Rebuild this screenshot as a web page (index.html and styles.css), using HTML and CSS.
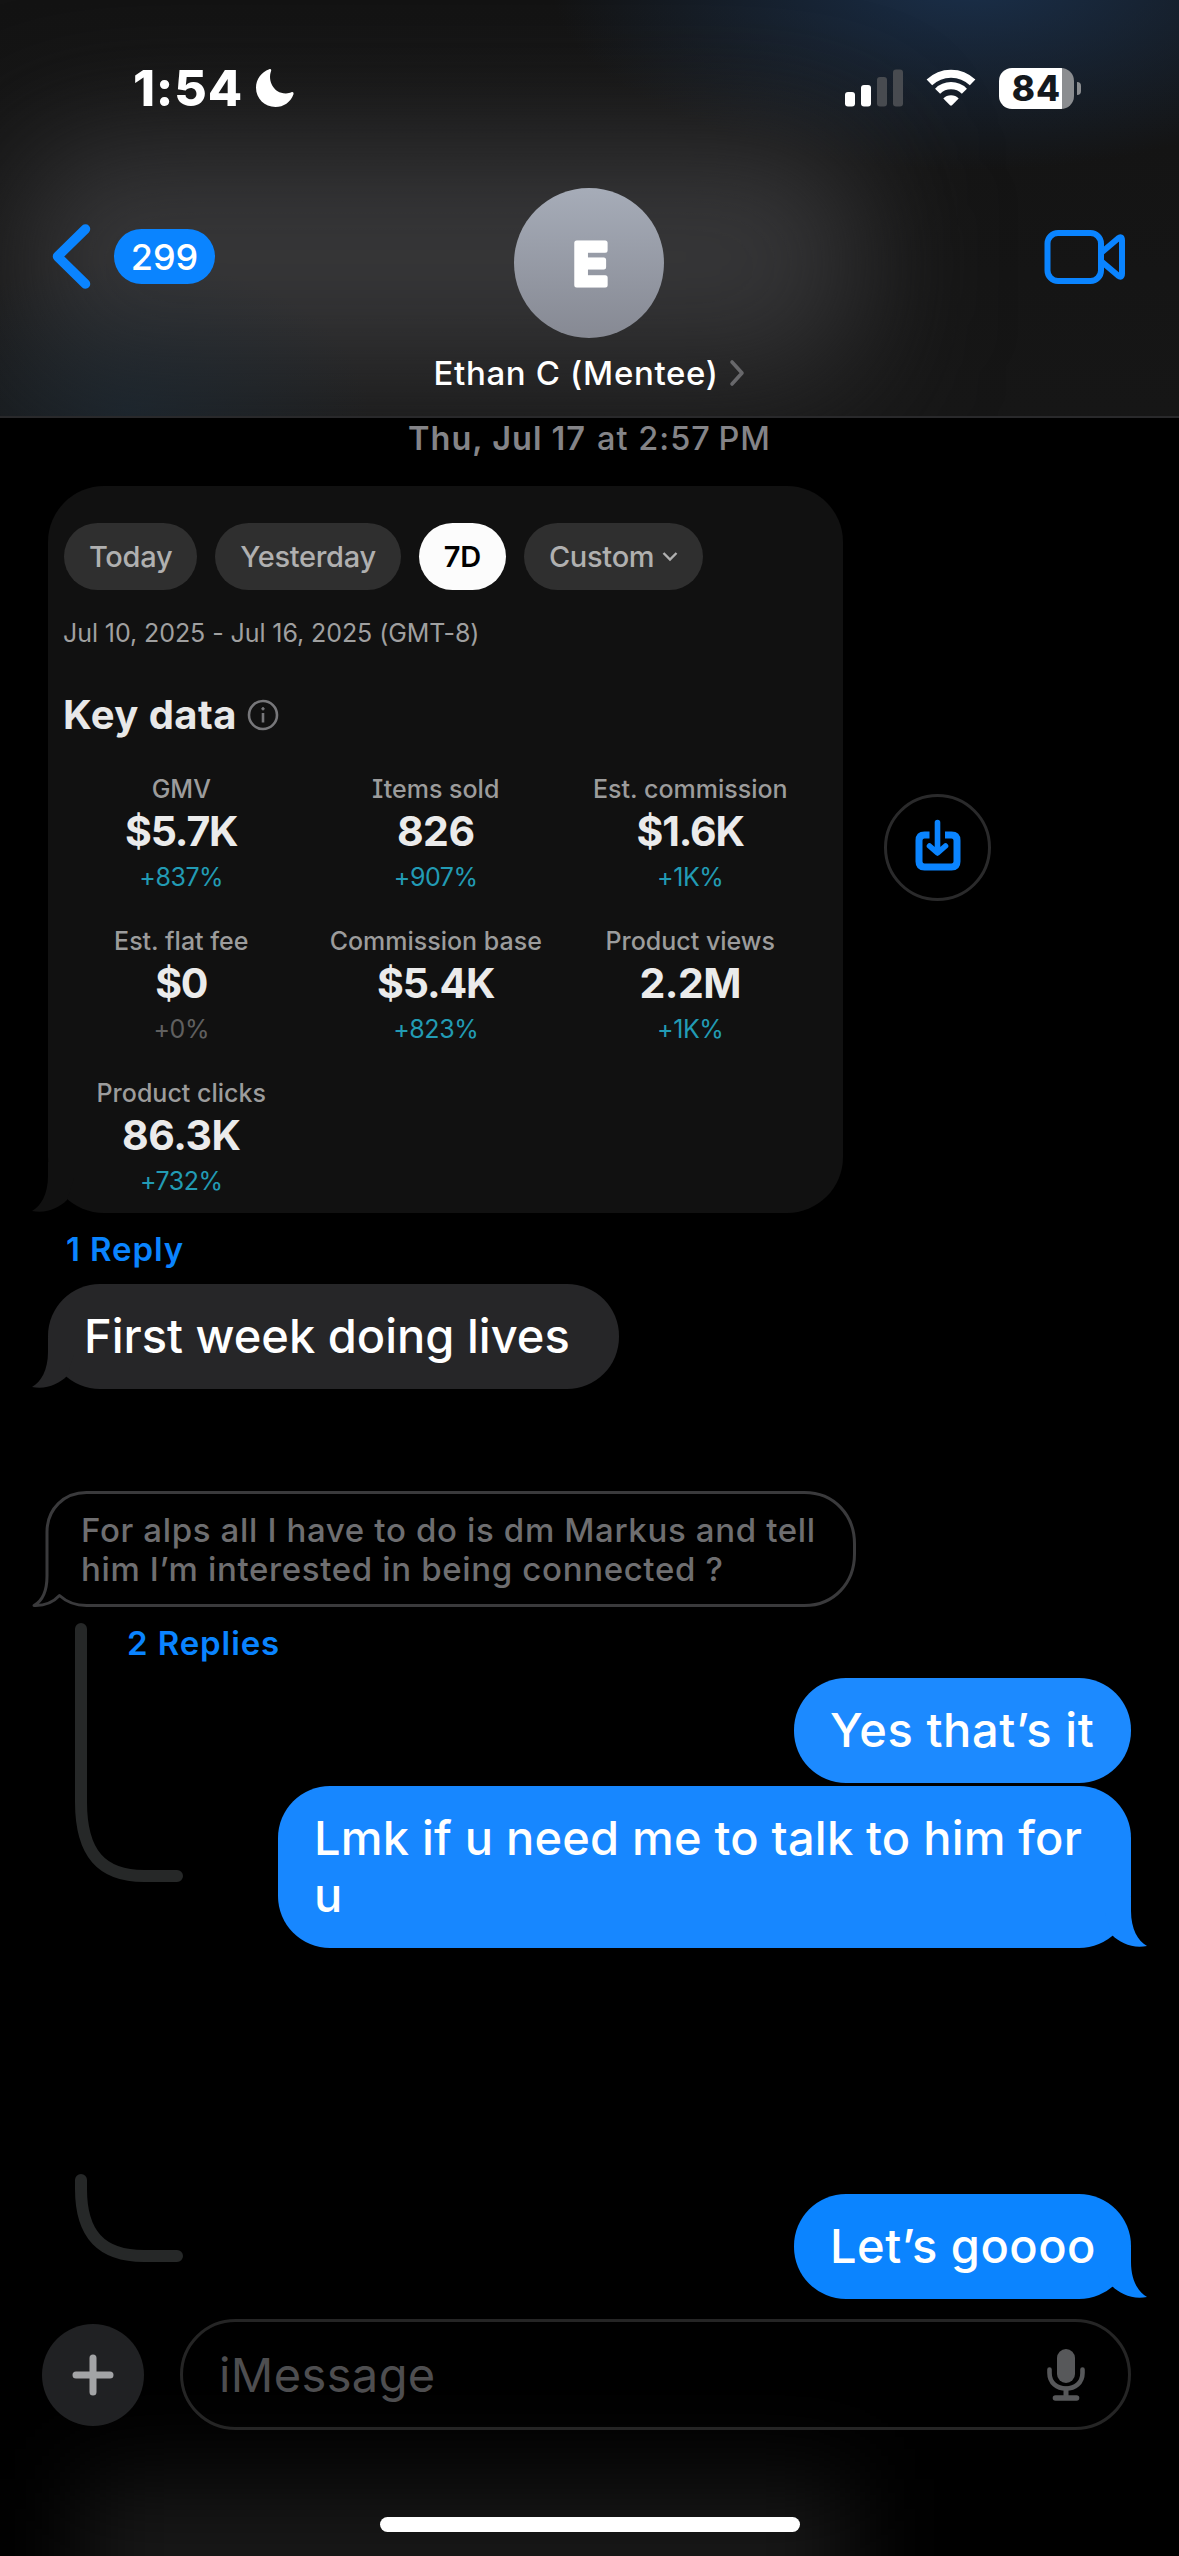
FILE: index.html
```html
<!DOCTYPE html>
<html lang="en">
<head>
<meta charset="utf-8">
<title>Messages</title>
<link rel="stylesheet" href="styles.css">
</head>
<body>
<div class="phone">
  <header class="top">
    <div class="status">
      <div class="status-left">
        <span class="clock">1:54</span>
        <svg class="moon" width="40" height="40" viewBox="0 0 40 40"><path d="M14.2 1.2C15.6.4 16.8 1.4 16 3.2C12.6 12.4 18.4 25.6 31 25.4C33.4 25.3 34.6 24.8 36.4 24.2C38.2 23.6 39 24.8 38.4 26.4C35.6 34 28.600 39 20.500 39C9.600 39 1 30.600 1 19.800C1 11.400 6.200 4 14.200 1.200Z" fill="#fff"/></svg>
      </div>
      <div class="status-right">
        <svg width="58" height="38" viewBox="0 0 58 38"><rect x="0" y="23" width="10" height="14.500" rx="3" fill="#fff"/><rect x="16" y="16" width="10" height="21.500" rx="3" fill="#fff"/><rect x="32" y="8" width="10" height="29.500" rx="3" fill="#484b50"/><rect x="48" y="0.500" width="10" height="37" rx="3" fill="#484b50"/></svg>
        <svg width="50" height="38" viewBox="0 0 50 38" fill="none" stroke="#fff"><path d="M3.400 13.400A31 31 0 0 1 46.600 13.400" stroke-width="8"/><path d="M11.600 22.200A19 19 0 0 1 38.400 22.200" stroke-width="7.200"/><path d="M17.300 29.500A11 11 0 0 1 32.700 29.500L26 36.300Q25 37.200 24 36.300Z" fill="#fff" stroke="none"/></svg>
        <div class="battery"><span class="battery-body"><span class="battery-text">84</span></span><span class="battery-nub"></span></div>
      </div>
    </div>
    <div class="nav">
      <div class="back">
        <svg width="40" height="67" viewBox="0 0 40 67" fill="none" stroke="#0a84ff" stroke-width="9.500" stroke-linecap="round" stroke-linejoin="round"><path d="M34.500 6L6.500 33.500L34.500 61"/></svg>
        <span class="badge">299</span>
      </div>
      <div class="contact">
        <div class="avatar"><svg width="150" height="150" viewBox="0 0 150 150"><text class="initial" x="76.500" y="97" text-anchor="middle">E</text></svg></div>
        <div class="name"><span class="name-text">Ethan C (Mentee)</span><svg width="16" height="28" viewBox="0 0 16 28" fill="none" stroke="#68686b" stroke-width="3.600" stroke-linecap="round" stroke-linejoin="round"><path d="M3 3L13 14L3 25"/></svg></div>
      </div>
      <svg class="video" width="82" height="56" viewBox="0 0 82 56" fill="none" stroke="#0a84ff" stroke-width="6" stroke-linejoin="round"><rect x="3.500" y="4" width="53.500" height="48" rx="10.500"/><path d="M57.500 23.500L74 9.500Q78 6.500 78 11.500V44.500Q78 49.500 74 46.500L57.500 32.500"/></svg>
    </div>
  </header>

  <main class="thread">
    <div class="stamp"><b>Thu, Jul 17</b><span>at 2:57&#8202;&#8202;PM</span></div>

    <div class="shared">
      <section class="card">
        <svg class="tail" width="42" height="51" viewBox="0 0 42 51"><path d="M16 0V14C16 32 9 44 0 49C14 52 27 46 35 38L42 16V0Z" fill="#111"/></svg>
        <div class="pills">
          <span class="pill">Today</span>
          <span class="pill">Yesterday</span>
          <span class="pill on">7D</span>
          <span class="pill">Custom<svg width="16" height="11" viewBox="0 0 16 11" fill="none" stroke="#b0b0b0" stroke-width="2.400"><path d="M1.500 2L8 8.500L14.500 2"/></svg></span>
        </div>
        <p class="range">Jul 10, 2025 - Jul 16, 2025 (GMT-8)</p>
        <h2 class="heading">Key data<svg width="32" height="32" viewBox="0 0 32 32" fill="none" stroke="#77777a" stroke-width="2.600"><circle cx="16" cy="16" r="14"/><path d="M16 14V23.500"/><circle cx="16" cy="9.800" r="1.200" fill="#77777a" stroke-width="1"/></svg></h2>
        <div class="stats">
          <div class="stat"><span class="label">GMV</span><span class="value money">$5.7K</span><span class="change">+837%</span></div>
          <div class="stat"><span class="label">Items sold</span><span class="value">826</span><span class="change">+907%</span></div>
          <div class="stat"><span class="label">Est. commission</span><span class="value money">$1.6K</span><span class="change">+1K%</span></div>
          <div class="stat"><span class="label">Est. flat fee</span><span class="value money">$0</span><span class="change flat">+0%</span></div>
          <div class="stat"><span class="label">Commission base</span><span class="value money">$5.4K</span><span class="change">+823%</span></div>
          <div class="stat"><span class="label">Product views</span><span class="value">2.2M</span><span class="change">+1K%</span></div>
          <div class="stat"><span class="label">Product clicks</span><span class="value">86.3K</span><span class="change">+732%</span></div>
        </div>
      </section>
      <div class="save"><svg width="48" height="54" viewBox="0 0 48 54" fill="none" stroke="#0a84ff" stroke-width="7"><path d="M15.500 17H10.500Q5 17 5 22.500V43.500Q5 49 10.500 49H37.500Q43 49 43 43.500V22.500Q43 17 37.500 17H31"/><path d="M23.500 4.500V34M15.500 28L23.500 35L31.500 28" stroke-width="5.600" stroke-linecap="round" stroke-linejoin="round"/></svg></div>
    </div>

    <div class="replies one">1 Reply</div>
    <div class="bubble in"><svg class="tail" width="42" height="51" viewBox="0 0 42 51"><path d="M16 0V14C16 32 9 44 0 49C14 52 27 46 35 38L42 16V0Z" fill="#262628"/></svg>First week doing lives</div>

    <div class="group">
      <div class="quote">
        <svg class="outline" width="826" height="118" viewBox="0 0 826 118" fill="none" stroke="#3a3a3c" stroke-width="3"><path d="M54.500 2.500H772.500C802 2.500 822.500 25 822.500 54V64C822.500 93 802 115.500 772.500 115.500H54.500C43 115.500 34 111.500 27.500 105.500C21 112.500 14 116 2 115.500C12 110 15 99 15 86V42C15 19 32 2.500 54.500 2.500Z" stroke-linejoin="round"/></svg>
        For alps all I have to do is dm Markus and tell<br>him I’m interested in being connected ?
      </div>
      <div class="replies two">2 Replies</div>
      <svg class="line" width="120" height="262" viewBox="0 0 120 262" fill="none" stroke="#262828" stroke-width="12" stroke-linecap="round"><path d="M7 7V180C7 232 28 254 70 254H103"/></svg>
      <div class="bubble out a">Yes that’s it</div>
      <div class="bubble out b"><svg class="tail" width="42" height="51" viewBox="0 0 42 51"><path d="M16 0V14C16 32 9 44 0 49C14 52 27 46 35 38L42 16V0Z" fill="#1787ff"/></svg>Lmk if u need me to talk to him for<br>u</div>
    </div>

    <div class="group last">
      <svg class="line" width="120" height="92" viewBox="0 0 120 92" fill="none" stroke="#262828" stroke-width="12" stroke-linecap="round"><path d="M7 7V16C7 60 26 83 70 83H103"/></svg>
      <div class="bubble out c"><svg class="tail" width="42" height="51" viewBox="0 0 42 51"><path d="M16 0V14C16 32 9 44 0 49C14 52 27 46 35 38L42 16V0Z" fill="#0b84ff"/></svg>Let’s goooo</div>
    </div>
  </main>

  <footer class="composer">
    <div class="bar">
      <div class="plus"><svg width="44" height="44" viewBox="0 0 44 44" stroke="#a3a4a6" stroke-width="7" stroke-linecap="round"><path d="M22 5V39M5 22H39"/></svg></div>
      <div class="field"><span>iMessage</span>
        <svg width="40" height="54" viewBox="0 0 40 54" fill="none" stroke="#57585a" stroke-linecap="round"><rect x="11" y="1" width="18" height="34" rx="9" fill="#57585a" stroke="none"/><path d="M3.500 21.500V25C3.500 35 11 40.500 20 40.500S36.500 35 36.500 25V21.500" stroke-width="4.600"/><path d="M20 41V49" stroke-width="5"/><path d="M9.500 50H30.500" stroke-width="5.600"/></svg>
      </div>
    </div>
    <div class="home"></div>
  </footer>
</div>
</body>
</html>
```
FILE: styles.css
```css
* { box-sizing: border-box; }
body { margin: 0; background: #000; font-family: Inter, "Liberation Sans", sans-serif; color: #fff; }
svg { display: block; flex: none; }
.phone { width: 1179px; height: 2556px; display: flex; flex-direction: column; overflow: hidden; }

/* Header: blurred conversation showing through the bar */
.top {
  position: relative;
  z-index: 0;
  overflow: hidden;
  height: 418px;
  border-bottom: 2px solid #29292b;
  background:
    radial-gradient(ellipse 420px 190px at 970px -20px, rgba(27, 52, 84, .85), rgba(27, 50, 80, 0)),
    linear-gradient(#131313, #161616);
}
.top::before {
  content: "";
  position: absolute;
  z-index: -1;
  left: 20px;
  top: 145px;
  width: 840px;
  height: 245px;
  border-radius: 60px;
  background: linear-gradient(#39393b 40%, #2c2c2d);
  filter: blur(66px);
}
.top::after {
  content: "";
  position: absolute;
  z-index: -1;
  inset: 0;
  background: radial-gradient(ellipse 240px 150px at 130px 410px, rgba(28, 42, 54, .6), rgba(28, 40, 50, 0));
}
.status { display: flex; justify-content: space-between; padding: 67px 98px 0 133px; height: 109px; }
.status-left { display: flex; align-items: center; }
.clock { width: 122px; font-size: 50px; line-height: 42px; font-weight: 800; letter-spacing: 0.8px; }
.status-right { display: flex; align-items: center; gap: 23px; }
.battery { display: flex; align-items: center; gap: 3px; }
.battery-body { width: 75px; height: 41px; border-radius: 13px; background: linear-gradient(90deg, #fff 63px, #8b8d90 63px); display: flex; justify-content: center; }
.battery-text { color: #14181d; font-size: 35px; font-weight: 800; line-height: 41px; letter-spacing: 1.2px; }
.battery-nub { width: 4px; height: 13px; background: #8b8d90; border-radius: 0 4px 4px 0; }

.nav { display: grid; grid-template-columns: 1fr auto 1fr; padding: 79px 51px 0; }
.back { display: flex; align-items: center; gap: 23px; height: 67px; margin-top: 35px; }
.badge { width: 101px; height: 55px; border-radius: 28px; background: #0a84ff; font-size: 36px; line-height: 56px; text-align: center; font-weight: 500; }
.contact { display: flex; flex-direction: column; align-items: center; }
.avatar { width: 150px; height: 150px; border-radius: 50%; background: linear-gradient(#a6acb8, #868993); }
.initial { font-size: 58px; font-weight: 700; fill: #fff; stroke: #fff; stroke-width: 5px; stroke-linejoin: round; }
.name { display: flex; align-items: center; gap: 11px; margin-top: 15px; height: 40px; }
.name-text { font-size: 33px; font-weight: 500; line-height: 40px; letter-spacing: 0.65px; white-space: nowrap; }
.video { justify-self: end; margin: 41px 2px 0 0; }

/* Conversation */
.thread { height: 1881px; display: flex; flex-direction: column; }
.stamp { height: 40px; line-height: 42px; font-size: 32.5px; font-weight: 500; letter-spacing: 1px; color: #848488; display: flex; justify-content: center; gap: 11px; }
.stamp b { font-weight: 600; }
.shared { display: flex; align-items: flex-start; gap: 41px; margin: 28px 0 0 48px; }
.card { position: relative; width: 795px; height: 727px; padding-top: 37px; background: #111; border-radius: 56px; }
.tail { position: absolute; left: -16px; bottom: 0; }
.pills { display: flex; gap: 18px; padding-left: 16px; }
.pill { height: 67px; padding: 0 25px; border-radius: 34px; background: #2f2f2f; color: #b0b0b0; font-size: 29px; font-weight: 500; letter-spacing: -0.3px; display: flex; align-items: center; gap: 8px; }
.pill.on { background: #fcfcfc; color: #000; font-weight: 600; }
.range { margin: 28px 0 0 15px; font-size: 25px; line-height: 30px; letter-spacing: -0.08px; color: #a0a0a0; }
.heading { margin: 42px 0 0 15px; font-size: 40px; line-height: 50px; letter-spacing: 0.46px; color: #e8e8e8; font-weight: 700; display: flex; align-items: center; gap: 10px; }
.stats { display: grid; grid-template-columns: repeat(3, 254.500px); row-gap: 34px; margin: 34px 0 0 6px; }
.stat { display: flex; flex-direction: column; align-items: center; height: 118px; }
.label { font-size: 25px; line-height: 30px; font-weight: 500; color: #9c9c9c; font-feature-settings: "cv08"; }
.value { font-size: 41px; line-height: 50px; margin: 2px 0 6px; font-weight: 700; letter-spacing: -0.5px; color: #ebebeb; }
.money { letter-spacing: -1.150px; }
.change { font-size: 25px; line-height: 30px; letter-spacing: -0.45px; color: #229bb4; }
.flat { color: #606060; }
.save { width: 107px; height: 107px; margin-top: 308px; border-radius: 50%; border: 3px solid #2a2a2b; display: grid; place-items: center; }
.save svg { margin-top: -6px; }

.replies { font-size: 33px; line-height: 40px; font-weight: 600; letter-spacing: 0.9px; color: #0a84ff; }
.one { margin: 16px 0 15px 66px; }
.bubble { position: relative; align-self: flex-start; border-radius: 52px; padding: 23px 36px 25px; font-size: 47px; line-height: 57px; font-weight: 500; white-space: nowrap; }
.in { margin-left: 48px; width: 571px; background: #262628; }
.out { align-self: flex-end; margin-right: 48px; }
.out .tail { left: auto; right: -16px; transform: scaleX(-1); }
.a { width: 337px; background: #1c8aff; letter-spacing: 0.6px; }
.b { width: 853px; background: #1787ff; letter-spacing: 0.2px; margin-top: 3px; }
.c { width: 337px; background: #0b84ff; letter-spacing: 0.5px; }
.group { position: relative; display: flex; flex-direction: column; margin-top: 101px; }
.quote { position: relative; height: 117px; padding: 21px 0 0 81px; font-size: 33px; line-height: 39px; font-weight: 500; letter-spacing: 0.65px; color: #6e6e70; white-space: nowrap; }
.outline { position: absolute; left: 32px; top: 0; }
.two { margin: 16px 0 15px 127px; }
.line { position: absolute; left: 74px; top: 132px; }
.last { margin-top: 246px; }
.last .line { top: -21px; }

/* Input bar */
.composer { position: relative; z-index: 0; overflow: hidden; flex: 1; background: #000; }
.composer::before {
  content: "";
  position: absolute;
  z-index: -1;
  left: 80px;
  top: 180px;
  width: 770px;
  height: 210px;
  background: #171717;
  filter: blur(45px);
}
.bar { display: flex; align-items: center; gap: 36px; padding: 20px 48px 0 42px; }
.plus { width: 102px; height: 102px; border-radius: 50%; background: #202123; display: grid; place-items: center; }
.field { flex: 1; height: 111px; border: 3px solid #252525; border-radius: 56px; padding: 0 42px 0 36px; display: flex; align-items: center; justify-content: space-between; font-size: 47px; letter-spacing: 0.4px; color: #4e4e50; }
.home { width: 420px; height: 15px; border-radius: 8px; background: #fff; margin: 87px auto 0; }
```
